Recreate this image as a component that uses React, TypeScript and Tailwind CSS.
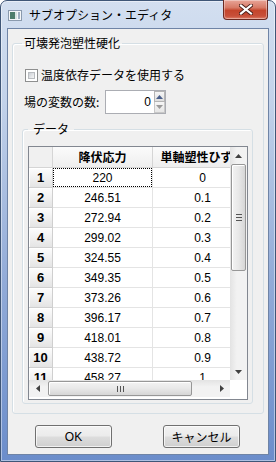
import React from 'react'

const rows: [string, string][] = [
    ['220', '0'],
    ['246.51', '0.1'],
    ['272.94', '0.2'],
    ['299.02', '0.3'],
    ['324.55', '0.4'],
    ['349.35', '0.5'],
    ['373.26', '0.6'],
    ['396.17', '0.7'],
    ['418.01', '0.8'],
    ['438.72', '0.9'],
    ['458.27', '1'],
]

function Arrow({ dir, color = '#404040' }: { dir: 'up' | 'down' | 'left' | 'right'; color?: string }) {
    const pts = {
        up: '0,4 3.5,0 7,4',
        down: '0,0 3.5,4 7,0',
        left: '4,0 0,3.5 4,7',
        right: '0,0 4,3.5 0,7',
    }[dir]
    const vertical = dir === 'up' || dir === 'down'
    return (
        <svg width={vertical ? 7 : 4} height={vertical ? 4 : 7} viewBox={vertical ? '0 0 7 4' : '0 0 4 7'}>
            <polygon points={pts} fill={color} />
        </svg>
    )
}

function AppIcon() {
    return (
        <svg width="14" height="11" viewBox="0 0 14 11">
            <rect x="0.5" y="0.5" width="13" height="10" fill="#f4f6f8" stroke="#8a9aae" />
            <rect x="2" y="2" width="5" height="7" fill="#4d7d6a" />
            <rect x="7" y="2" width="2" height="7" fill="#d8e4e0" />
            <rect x="10" y="2" width="2" height="7" fill="#9fb0c0" />
        </svg>
    )
}

export default function App() {
    return (
        <div className="h-[462px] w-[276px] font-['Liberation_Sans','Noto_Sans_CJK_JP',sans-serif] text-[12px] leading-[14px] text-black">
            <div className="flex h-full flex-col rounded-t-[7px] border border-[#3f5677] bg-[linear-gradient(180deg,#d3dff0_0%,#c2d2ea_22%,#93acd8_60%,#6b8dcb_100%)] shadow-[inset_0_0_0_1px_rgba(255,255,255,0.45)]">
                {/* title bar */}
                <div className="flex h-[27px] shrink-0 items-start">
                    <div className="ml-[7px] mt-[9px] flex">
                        <AppIcon />
                    </div>
                    <span className="ml-[7px] mt-[7px] whitespace-nowrap font-['Noto_Sans_CJK_JP',sans-serif] text-[12px] leading-[14px] text-black">
                        サブオプション・エディタ
                    </span>
                    <div className="-mt-px ml-auto mr-[7px] flex h-[20px] w-[45px] items-center justify-center rounded-b-[4px] border border-t-0 border-[#6b2a22] bg-[linear-gradient(180deg,#e8a598_0%,#d77a66_40%,#c4452c_55%,#c8503a_85%,#e0806a_100%)] shadow-[inset_0_0_0_1px_rgba(255,255,255,0.35)]">
                        <svg width="14" height="11" viewBox="0 0 14 11">
                            <path d="M2 1.5 L12 9.5 M12 1.5 L2 9.5" stroke="#4a1e18" strokeWidth="4" strokeLinecap="square" />
                            <path d="M2 1.5 L12 9.5 M12 1.5 L2 9.5" stroke="#ffffff" strokeWidth="2.2" strokeLinecap="square" />
                        </svg>
                    </div>
                </div>

                {/* client */}
                <div className="mx-[6px] mb-[6px] flex flex-1 flex-col border border-[#6f84a6] bg-[#f0f0f0]">
                    <fieldset className="mx-[4px] mt-[7px] rounded-[3px] border border-[#d5dfe5] p-0 shadow-[inset_1px_1px_0_#ffffff]">
                        <legend className="ml-[9px] px-[2px] font-['Noto_Sans_CJK_JP',sans-serif] text-[12px] leading-[14px]">
                            可壊発泡塑性硬化
                        </legend>

                        <div className="mt-[17px] flex h-[16px] items-center pl-[12px]">
                            <div className="h-[13px] w-[13px] border border-[#8e8f8f] bg-white p-[2px]">
                                <div className="h-full w-full border border-[#b9bcc0] bg-[linear-gradient(135deg,#cbcfd5,#f6f6f6)]" />
                            </div>
                            <span className="ml-[3px] font-['Noto_Sans_CJK_JP',sans-serif] leading-[16px]">
                                温度依存データを使用する
                            </span>
                        </div>

                        <div className="mt-[7px] flex h-[24px] items-center pl-[11px]">
                            <span className="w-[81px] whitespace-nowrap font-['Noto_Sans_CJK_JP',sans-serif] leading-[16px]">
                                場の変数の数:
                            </span>
                            <div className="flex h-[24px] w-[61px] border border-[#abadb3] bg-white">
                                <div className="flex flex-1 items-center justify-end pr-[3px] leading-[14px]">0</div>
                                <div className="flex w-[11px] flex-col">
                                    <div className="flex h-[11px] items-center justify-center border border-[#b4b4b4] bg-[linear-gradient(180deg,#f6f6f6,#dedede)]">
                                        <Arrow dir="up" color="#4a5f8a" />
                                    </div>
                                    <div className="flex h-[11px] items-center justify-center border border-t-0 border-[#c8c8c8] bg-[linear-gradient(180deg,#f6f6f6,#e6e6e6)]">
                                        <Arrow dir="down" color="#9a9a9a" />
                                    </div>
                                </div>
                            </div>
                        </div>

                        <fieldset className="mb-[9px] ml-[9px] mr-[10px] mt-[8px] rounded-[3px] border border-[#d5dfe5] p-0 shadow-[inset_1px_1px_0_#ffffff]">
                            <legend className="ml-[5px] px-[5px] font-['Noto_Sans_CJK_JP',sans-serif] text-[12px] leading-[14px]">
                                データ
                            </legend>

                            <div className="mb-[3px] ml-[5px] mt-[10px] flex h-[254px] w-[220px] flex-col border border-[#828790] bg-white">
                                <div className="flex min-h-0 flex-1">
                                    {/* table viewport */}
                                    <div className="min-w-0 flex-1 overflow-hidden">
                                        <div className="flex h-[21px] w-[224px]">
                                            <div className="w-[24px] shrink-0 border-b border-r border-[#d5d5d5] bg-[#f0f0f0]" />
                                            <div className="flex w-[100px] shrink-0 items-center justify-center border-b border-r border-[#d5d5d5] bg-[linear-gradient(180deg,#fbfbfb,#eeeeee)] font-['Noto_Sans_CJK_JP',sans-serif] font-bold">
                                                降伏応力
                                            </div>
                                            <div className="flex w-[100px] shrink-0 items-center justify-center overflow-hidden whitespace-nowrap border-b border-r border-[#d5d5d5] bg-[linear-gradient(180deg,#fbfbfb,#eeeeee)] font-['Noto_Sans_CJK_JP',sans-serif] font-bold">
                                                単軸塑性ひずみ
                                            </div>
                                        </div>
                                        {rows.map(([stress, strain], i) => (
                                            <div key={i} className="flex h-[20px] w-[224px]">
                                                <div className="flex w-[24px] shrink-0 items-center justify-center border-b border-r border-[#cfcfcf] bg-[linear-gradient(180deg,#fdfdfd,#e4e4e4)] text-[13px] font-bold shadow-[inset_1px_1px_0_#ffffff]">
                                                    {i + 1}
                                                </div>
                                                <div className="flex w-[100px] shrink-0 items-center justify-center border-b border-r border-[#e4e4e4]">
                                                    {i === 0 ? (
                                                        <div className="flex h-full w-full items-center justify-center border border-dotted border-black">
                                                            {stress}
                                                        </div>
                                                    ) : (
                                                        stress
                                                    )}
                                                </div>
                                                <div className="flex w-[100px] shrink-0 items-center justify-center border-b border-r border-[#e4e4e4]">
                                                    {strain}
                                                </div>
                                            </div>
                                        ))}
                                    </div>

                                    {/* vertical scrollbar */}
                                    <div className="flex w-[17px] shrink-0 flex-col bg-[linear-gradient(90deg,#e3e3e3,#f2f2f2_40%,#f2f2f2)]">
                                        <div className="flex h-[17px] items-center justify-center">
                                            <Arrow dir="up" />
                                        </div>
                                        <div className="flex flex-1 flex-col px-px">
                                            <div className="flex h-[107px] flex-col items-center justify-center gap-[2px] rounded-[2px] border border-[#979797] bg-[linear-gradient(90deg,#f3f3f3,#e8e8e8_50%,#d6d6d6)] shadow-[inset_1px_1px_0_#ffffff]">
                                                <div className="h-px w-[6px] bg-[#555]" />
                                                <div className="h-px w-[6px] bg-[#555]" />
                                                <div className="h-px w-[6px] bg-[#555]" />
                                            </div>
                                        </div>
                                        <div className="flex h-[17px] items-center justify-center">
                                            <Arrow dir="down" />
                                        </div>
                                    </div>
                                </div>

                                {/* horizontal scrollbar */}
                                <div className="mb-[2px] flex h-[17px] shrink-0">
                                    <div className="flex flex-1 bg-[linear-gradient(180deg,#e3e3e3,#f2f2f2_40%,#f2f2f2)]">
                                        <div className="flex w-[17px] items-center justify-center">
                                            <Arrow dir="left" />
                                        </div>
                                        <div className="flex flex-1 py-px pl-[2px]">
                                            <div className="flex w-[144px] items-center justify-center gap-[2px] rounded-[2px] border border-[#979797] bg-[linear-gradient(180deg,#f3f3f3,#e8e8e8_50%,#d6d6d6)] shadow-[inset_1px_1px_0_#ffffff]">
                                                <div className="h-[6px] w-px bg-[#555]" />
                                                <div className="h-[6px] w-px bg-[#555]" />
                                                <div className="h-[6px] w-px bg-[#555]" />
                                            </div>
                                        </div>
                                        <div className="flex w-[17px] items-center justify-center">
                                            <Arrow dir="right" />
                                        </div>
                                    </div>
                                    <div className="w-[17px] bg-white" />
                                </div>
                            </div>
                        </fieldset>
                    </fieldset>

                    {/* buttons */}
                    <div className="ml-[27px] mt-[11px] flex">
                        <button className="h-[23px] w-[77px] rounded-[3px] border border-[#707070] bg-[linear-gradient(180deg,#f2f2f2_0%,#ebebeb_48%,#dddddd_52%,#cfcfcf_100%)] font-['Liberation_Sans','Noto_Sans_CJK_JP',sans-serif] text-[12px] shadow-[inset_0_0_0_1px_rgba(255,255,255,0.7)]">
                            OK
                        </button>
                        <button className="ml-[51px] h-[23px] w-[77px] rounded-[3px] border border-[#707070] bg-[linear-gradient(180deg,#f2f2f2_0%,#ebebeb_48%,#dddddd_52%,#cfcfcf_100%)] font-['Noto_Sans_CJK_JP',sans-serif] text-[12px] shadow-[inset_0_0_0_1px_rgba(255,255,255,0.7)]">
                            キャンセル
                        </button>
                    </div>
                </div>
            </div>
        </div>
    )
}
